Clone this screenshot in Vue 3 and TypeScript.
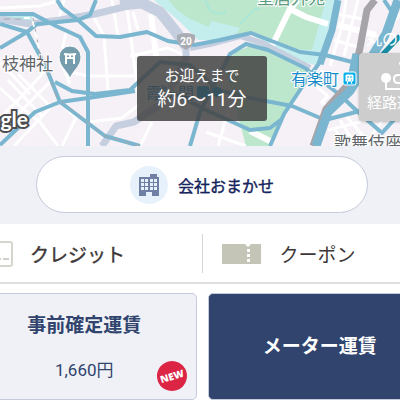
<script setup lang="ts">
import { ref } from 'vue'

type Fare = 'fixed' | 'meter'
const fare = ref<Fare>('meter')

const streets: string[] = [
  'M0 118L20 98L48 68', 'M0 88L22 108L40 122L58 146', 'M8 80L42 116', 'M18 74L50 106', 'M0 62L30 94', 'M0 132L52 80',
  'M14 146L50 108', 'M64 0L58 22', 'M66 32L60 60L70 84', 'M70 72L88 76L137 76', 'M104 36L108 90', 'M126 0L134 62L138 92',
  'M92 14L104 36', 'M62 146L76 118L58 100', 'M88 122L122 118L140 104', 'M112 0L118 36', 'M0 8L40 6L60 0',
  'M133 12L138 30', 'M130 56L168 48L186 56', 'M140 146L152 122', 'M218 146L228 112',
  'M206 132L246 146', 'M346 0L342 26L330 66', 'M358 0L352 24L344 56', 'M336 14L368 20',
  'M334 40L358 47', 'M322 70L318 88L328 96L322 102L332 110',
  'M340 120L356 146', 'M346 116L372 146', 'M334 128L346 146', 'M328 130L400 112', 'M384 118L364 146', 'M400 14L366 58',
]
const roads: string[] = [
  'M0 14L33 14L56 26L80 37L88 52L88 146',
  'M0 24L27 32', 'M0 48L27 32L37 24L78 20L90 15L96 0',
  'M57 0L62 8L78 20L96 36L120 37L147 32L168 41L194 45L220 40L251 33L300 52L325 55L360 64',
  'M27 32L45 65L60 102L105 136L140 146',
  'M55 82L72 91L95 94L130 90L160 62L190 65L218 90L250 98L292 106L325 120L360 111',
  'M0 145L35 112L60 102L88 98L135 91',
  'M190 146L200 112L230 54L246 44L268 50L305 68L340 95L358 112L382 133L400 113',
  'M160 86L206 110L250 130L270 128L282 119',
  'M270 146L284 114L304 84L320 62',
  'M384 0L394 15',
]
</script>

<template>
  <main class="app">
    <section class="map" aria-label="地図">
      <svg class="map-art" viewBox="0 0 400 146" preserveAspectRatio="xMidYMid slice" aria-hidden="true">
        <rect width="400" height="146" fill="#f5f1f6" />
        <path d="M154 0H336L318 66L298 60L250 34L222 40H198L178 20Z" fill="#c3eeed" />
        <path d="M168 0L178 11L190 19L209 27L211 21L240 28L235 36L251 31L276 41L296 49L312 50L326 0Z" fill="#bde7cd" />
        <path d="M224 64L236 52L250 46L268 52L309 72L284 112L270 146H246Z" fill="#bde7cd" />
        <path d="M205 0L211 12L222 14L226 10" fill="none" stroke="#a9e7d6" stroke-width="2" />
        <path d="M240 24L256 8L260 10" fill="none" stroke="#a9e7d6" stroke-width="2" />
        <path d="M0 13L33 16L30 22L0 17Z" fill="#b9e8e9" />
        <path v-for="(d, i) in streets" :key="`s${i}`" :d="d" fill="none" stroke="#fff" stroke-width="3" />
        <path d="M298 0L290 9L271 48M290 9L306 17L328 24M338 25L376 35M151 14L156 56M250 131L272 142" fill="none" stroke="#fff" stroke-width="6" />
        <g fill="none" stroke="#c6cfdf" stroke-linejoin="round">
          <path d="M0 19L30 24L60 20L95 14L140 3" stroke-width="7" />
          <path d="M120 5L142 3L160 12L176 32L186 46" stroke-width="11" />
          <path d="M186 40V58L164 102L134 122L116 126L102 146" stroke-width="7" />
          <path d="M190 48L210 44L240 36L262 43L310 68" stroke-width="6" />
        </g>
        <path v-for="(d, i) in roads" :key="`r${i}`" :d="d" fill="none" stroke="#7ab6cf" stroke-width="4" stroke-linejoin="round" />
        <path d="M338 0L332 30L320 64" fill="none" stroke="#7ab6cf" stroke-width="7" />
        <path d="M375 0L367 10L360 48L352 80L326 109L313 146" fill="none" stroke="#a7a4a9" stroke-width="7" />
        <path d="M400 36L383 54L352 88L334 105" fill="none" stroke="#198da4" stroke-width="5" />
        <path d="M398 0L386 34L350 91L328 112L316 146M357 54L352 78" fill="none" stroke="#7ab6cf" stroke-width="9" />
        <path d="M4 19H24M33 18L40 54L57 98L105 136L140 146" fill="none" stroke="#a9a6aa" stroke-width="1" stroke-dasharray="6 5" />
        <path d="M24 18L32 18L40 53" fill="none" stroke="#fff" stroke-width="2" stroke-dasharray="6 5" />

        <g transform="translate(70 79)">
          <path d="M0 0C-2-8-11-12-11-22A11 11 0 0 1 11-22C11-12 2-8 0 0Z" fill="#769dae" stroke="#fff" stroke-width="1" />
          <path d="M-6-25Q0-24 6-25M-5-21H5M-4-24V-15M4-24V-15M0-24V-21" fill="none" stroke="#fff" stroke-width="2" />
        </g>
        <path d="M177 35Q186 31 195 35Q197 44 186 50Q175 44 177 35Z" fill="#a9acb2" />
        <text x="186" y="45" class="route" text-anchor="middle">20</text>

        <g class="place">
          <text x="-15" y="70">日枝神社</text>
          <text x="334" y="149">歌舞伎座</text>
          <text x="257" y="4" class="park">皇居外苑</text>
          <text x="366" y="45" class="faint">丸の内</text>
          <text x="291" y="85" class="station">有楽町</text>
          <text x="146" y="99" class="station">霞ヶ関</text>
        </g>
        <g>
          <rect x="343" y="72" width="13" height="13" rx="2" fill="#05aee9" stroke="#fff" />
          <path d="M346 75H353V81H346ZM347 84L348 81M352 84L351 81" fill="#fff" stroke="#fff" />
          <path d="M347 77H349M350 77H352M347 80H348M351 80H352" stroke="#05aee9" />
        </g>
        <g fill="#05aee9"><rect x="197" y="86" width="12" height="12" rx="2" /><rect x="212" y="87" width="10" height="10" rx="5" /></g>
        <text x="28" y="127" class="brand" text-anchor="end">Google</text>
      </svg>

      <p class="pickup"><span>お迎えまで</span><strong>約6〜11分</strong></p>
      <button class="route-button" type="button">
        <svg viewBox="0 0 40 30" aria-hidden="true">
          <circle cx="8" cy="17" r="5" fill="#fff" />
          <path d="M8 19V28H30M30 22H20Q16 22 16 18T20 14H30M22 1A6 6 0 0 0 28 7" fill="none" stroke="#fff" stroke-width="2" />
        </svg>
        <span>経路選択</span>
      </button>
    </section>

    <section class="company">
      <button class="company-button" type="button">
        <span class="company-icon">
          <svg viewBox="0 0 20 22" aria-hidden="true">
            <path d="M0 3H11V0H18V3H20V22H13V18H7V22H0Z" fill="#707fa4" />
            <path d="M2 5h3v3h-3zM6 5h3v3h-3zM11 5h3v3h-3zM15 5h3v3h-3zM2 9h3v3h-3zM6 9h3v3h-3zM11 9h3v3h-3zM15 9h3v3h-3zM2 13h3v3h-3zM6 13h3v3h-3zM11 13h3v3h-3zM15 13h3v3h-3z" fill="#e6f1fb" />
          </svg>
        </span>
        会社おまかせ
      </button>
    </section>

    <section class="payment">
      <button type="button" class="credit">
        <svg class="card-icon" viewBox="0 0 40 26" aria-hidden="true">
          <rect x="1" y="1" width="38" height="24" rx="2" fill="#fff" stroke="#d5d7cc" stroke-width="2" />
          <path d="M5 18H11M13 18H19M22 18H28M30 18H36" stroke="#d0d1cb" stroke-width="2" />
        </svg>
        クレジット
      </button>
      <button type="button" class="coupon">
        <svg class="ticket-icon" viewBox="0 0 39 20" aria-hidden="true">
          <path d="M0 0H23L26 3L29 0H39V20H0Z" fill="#c4c4b7" />
          <path d="M25 5h3v3h-3zM25 10h3v3h-3zM25 15h3v3h-3z" fill="#fff" />
        </svg>
        クーポン
      </button>
    </section>

    <section class="fares">
      <button type="button" :class="['fare', { selected: fare === 'fixed' }]" :aria-pressed="fare === 'fixed'" @click="fare = 'fixed'">
        <span class="fare-name">事前確定運賃</span>
        <span class="price">1,660円</span>
        <span class="new">NEW</span>
      </button>
      <button type="button" :class="['fare', { selected: fare === 'meter' }]" :aria-pressed="fare === 'meter'" @click="fare = 'meter'">
        <span class="fare-name">メーター運賃</span>
      </button>
    </section>
  </main>
</template>

<style>
body {
  margin: 0;
  background: #fff;
}
</style>

<style scoped>
.app {
  overflow: hidden;
  font-family: Roboto, "Noto Sans CJK JP", sans-serif;
  background: #fff;
}
button {
  margin: 0;
  padding: 0;
  border: 0;
  background: none;
  color: inherit;
  font: inherit;
  white-space: nowrap;
  cursor: pointer;
}
svg {
  display: block;
  flex: none;
}
.map {
  position: relative;
  height: 146px;
  overflow: hidden;
}
.map-art {
  width: 100%;
  height: 100%;
}
.place text {
  font-size: 17px;
  fill: #62666a;
  stroke: #fff;
  stroke-width: 2px;
  paint-order: stroke;
}
.place .park {
  fill: #5b9b80;
}
.place .faint {
  font-size: 16px;
  fill: #fff;
  stroke: none;
}
.place .station {
  font-size: 16px;
  fill: #168bc8;
}
.route {
  font-size: 10px;
  font-weight: 700;
  fill: #fff;
}
.brand {
  font-family: Lato, sans-serif;
  font-size: 21px;
  font-weight: 700;
  fill: #fff;
  stroke: #4e4e50;
  stroke-width: 4px;
  paint-order: stroke;
}
.pickup {
  position: absolute;
  top: 56px;
  left: 137px;
  display: flex;
  flex-direction: column;
  align-items: center;
  box-sizing: border-box;
  width: 130px;
  height: 65px;
  margin: 0;
  padding-top: 8px;
  border-radius: 3px;
  background: rgba(64, 64, 64, 0.84);
  color: #fff;
  font-size: 15px;
  line-height: 24px;
}
.pickup strong {
  font-size: 19px;
  font-weight: 400;
}
.route-button {
  position: absolute;
  top: 53px;
  left: 359px;
  display: flex;
  flex-direction: column;
  gap: 2px;
  box-sizing: border-box;
  width: 76px;
  height: 68px;
  padding: 8px 7px;
  border-radius: 4px;
  background: #cdcdcd;
  box-shadow: 0 1px 3px rgba(0, 0, 0, 0.25);
  color: #fff;
  font-size: 15px;
  line-height: 20px;
}
.route-button svg {
  width: 40px;
  height: 30px;
  margin-left: 12px;
}
.company {
  padding: 10px 32px 11px 36px;
  background: #eff1f6;
}
.company-button {
  display: flex;
  align-items: center;
  justify-content: center;
  gap: 10px;
  box-sizing: border-box;
  width: 100%;
  height: 57px;
  border: 1px solid #c5cadc;
  border-radius: 29px;
  background: #fff;
  color: #14245c;
  font-size: 16px;
  -webkit-text-stroke: 0.4px;
}
.company-icon {
  display: grid;
  place-items: center;
  width: 38px;
  height: 38px;
  border-radius: 50%;
  background: #e6f1fb;
}
.company-icon svg {
  width: 20px;
  height: 22px;
}
.payment {
  display: grid;
  grid-template-columns: 1fr 1fr;
  margin: 0 -32px 0 -27px;
  padding: 10px 0 9px;
  border-bottom: 2px solid #dedede;
  color: #3e3737;
}
.payment button {
  display: flex;
  align-items: center;
  height: 39px;
  font-size: 19px;
}
.payment .credit {
  gap: 17px;
  border-right: 1px solid #d5d5d5;
  -webkit-text-stroke: 0.4px;
}
.payment .coupon {
  gap: 19px;
  padding-left: 19px;
}
.card-icon {
  width: 40px;
  height: 26px;
}
.ticket-icon {
  width: 39px;
  height: 20px;
}
.fares {
  display: grid;
  grid-template-columns: 1fr 1fr;
  gap: 11px;
  margin: 0 -32px 0 -28px;
  padding-top: 9px;
}
.fare {
  position: relative;
  display: flex;
  flex-direction: column;
  align-items: center;
  justify-content: center;
  gap: 18px;
  min-height: 107px;
  border: 1px solid #c5cbdc;
  border-radius: 5px;
  background: #eff1f6;
  color: #30446e;
}
.fare.selected {
  background: #30446e;
  color: #fff;
}
.fare-name {
  font-size: 19px;
  font-weight: 700;
  line-height: 28px;
}
.price {
  font-size: 17px;
  line-height: 24px;
}
.new {
  position: absolute;
  right: 9px;
  bottom: 8px;
  display: grid;
  place-items: center;
  width: 30px;
  height: 30px;
  border-radius: 50%;
  background: #dc2445;
  color: #fff;
  font-family: "Open Sans", sans-serif;
  font-size: 10px;
  font-weight: 800;
  line-height: 30px;
  transform: rotate(-17deg);
}
</style>
